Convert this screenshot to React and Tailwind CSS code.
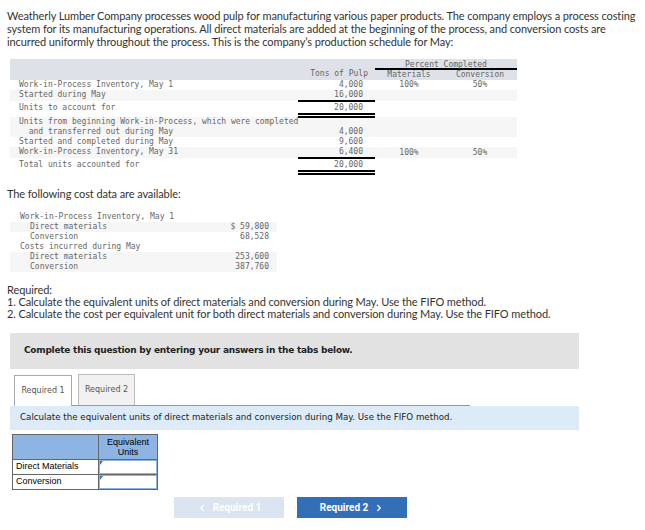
import { ChevronLeft, ChevronRight } from 'lucide-react';

const mono = { fontFamily: '"DejaVu Sans Mono", "Liberation Mono", monospace' };

const schedule = [
  { label: 'Work-in-Process Inventory, May 1', tons: '4,000', mat: '100%', conv: '50%', stripe: false },
  { label: 'Started during May', tons: '16,000', stripe: true, line: 'single' },
  { label: 'Units to account for', tons: '20,000', stripe: false, line: 'double', gap: true },
  { label: 'Units from beginning Work-in-Process, which were completed', label2: '  and transferred out during May', tons: '4,000', stripe: true },
  { label: 'Started and completed during May', tons: '9,600', stripe: false },
  { label: 'Work-in-Process Inventory, May 31', tons: '6,400', mat: '100%', conv: '50%', stripe: true, line: 'single' },
  { label: 'Total units accounted for', tons: '20,000', stripe: false, line: 'double', gap: true },
];

const costs = [
  { label: 'Work-in-Process Inventory, May 1', indent: false },
  { label: 'Direct materials', value: '$ 59,800', indent: true, stripe: true },
  { label: 'Conversion', value: '68,528', indent: true },
  { label: 'Costs incurred during May', indent: false },
  { label: 'Direct materials', value: '253,600', indent: true, stripe: true },
  { label: 'Conversion', value: '387,760', indent: true, stripe: true },
];

function ScheduleRow({ row }) {
  return (
    <div className={`flex ${row.stripe ? 'bg-[#f6f6f6]' : ''} ${row.gap ? 'py-[2px]' : ''}`}>
      <div className="w-[288px] pl-[9px] whitespace-pre">
        <div>{row.label}</div>
        {row.label2 && <div>{row.label2}</div>}
      </div>
      <div className="w-[77px] flex flex-col justify-end">
        <div className="text-right pr-[12px]">{row.tons}</div>
        {row.line === 'single' && <div className="h-[2px] bg-black -mb-[1px]" />}
        {row.line === 'double' && <div className="h-[5px] border-y-2 border-black -mb-[3px]" />}
      </div>
      <div className="w-[68px] flex items-end justify-center">{row.mat}</div>
      <div className="w-[74px] flex items-end justify-center">{row.conv}</div>
    </div>
  );
}

export default function App() {
  return (
    <div className="w-[645px] h-[530px] bg-white text-[#333] relative overflow-hidden" style={{ fontFamily: 'Lato, "Open Sans", sans-serif' }}>
      <p className="pl-[7px] pr-[6px] pt-[9px] text-[11px] leading-[13px] tracking-[-0.1px]">
        Weatherly Lumber Company processes wood pulp for manufacturing various paper products. The company employs a process costing system for its manufacturing operations. All direct materials are added at the beginning of the process, and conversion costs are incurred uniformly throughout the process. This is the company’s production schedule for May:
      </p>

      <div className="ml-[10px] mt-[11px] w-[507px] text-[8px] leading-[10px] text-[#666]" style={mono}>
        <div className="flex h-[21px] bg-[#dee1e7]">
          <div className="w-[288px]" />
          <div className="w-[77px] flex items-end justify-end pr-[7px] pb-[1px]">Tons of Pulp</div>
          <div className="w-[142px] flex flex-col">
            <div className="text-center pt-[1px] border-b-2 border-black h-[11px] leading-[9px]">Percent Completed</div>
            <div className="flex flex-1 items-end pb-[1px]">
              <div className="w-[68px] text-center">Materials</div>
              <div className="w-[74px] text-center">Conversion</div>
            </div>
          </div>
        </div>
        {schedule.map((row, i) => (
          <ScheduleRow key={i} row={row} />
        ))}
      </div>

      <p className="pl-[7px] mt-[13px] text-[11px] leading-[13px] tracking-[-0.1px]">The following cost data are available:</p>

      <div className="ml-[10px] mt-[12px] w-[267px] text-[8px] leading-[10px] text-[#666]" style={mono}>
        {costs.map((c, i) => (
          <div key={i} className={`flex ${c.stripe ? 'bg-[#f6f6f6]' : ''}`}>
            <div className={`flex-1 ${c.indent ? 'pl-[20px]' : 'pl-[10px]'}`}>{c.label}</div>
            <div className="w-[80px] text-right pr-[8px] whitespace-pre">{c.value}</div>
          </div>
        ))}
      </div>

      <div className="pl-[7px] mt-[12px] text-[11px] leading-[12px] tracking-[-0.1px]">
        <div>Required:</div>
        <div>1. Calculate the equivalent units of direct materials and conversion during May. Use the FIFO method.</div>
        <div>2. Calculate the cost per equivalent unit for both direct materials and conversion during May. Use the FIFO method.</div>
      </div>

      <div className="mx-[10px] w-[569px] mt-[13px] h-[36px] bg-[#e2e2e2] flex items-center pl-[14px]">
        <span className="text-[9px] tracking-[-0.25px] font-bold text-[#222]" style={{ fontFamily: '"DejaVu Sans", Verdana, sans-serif' }}>
          Complete this question by entering your answers in the tabs below.
        </span>
      </div>

      <div className="ml-[14px] mt-[6px] w-[456px] flex items-end border-b border-[#999] h-[31px]" style={{ fontFamily: '"DejaVu Sans", Verdana, sans-serif' }}>
        <div className="h-[31px] w-[58px] border border-b-0 border-[#aaa] bg-white text-[8px] text-[#555] flex items-center justify-center -mb-[1px] pb-[1px]">Required 1</div>
        <div className="h-[31px] w-[57px] ml-[6px] border border-b-0 border-[#bbb] bg-[#f1f1f1] text-[8px] text-[#555] flex items-center justify-center">Required 2</div>
      </div>

      <div className="mx-[10px] w-[569px] h-[24px] bg-[#dcebf7] flex items-center pl-[10px] text-[8.7px] text-[#222]" style={{ fontFamily: '"DejaVu Sans", Verdana, sans-serif' }}>
        Calculate the equivalent units of direct materials and conversion during May. Use the FIFO method.
      </div>

      <div className="ml-[12px] mt-[4px] w-[146px] border border-[#666] text-[9px] text-black" style={{ fontFamily: '"Liberation Sans", Arial, sans-serif' }}>
        <div className="flex h-[24px] bg-[#8db4e2]">
          <div className="w-[86px] border-r border-[#666]" />
          <div className="flex-1 text-center leading-[10px] pt-[2px]">Equivalent<br />Units</div>
        </div>
        {['Direct Materials', 'Conversion'].map((label) => (
          <div key={label} className="flex h-[15px] border-t border-[#666]">
            <div className="w-[86px] border-r border-[#666] pl-[3px] flex items-center">{label}</div>
            <div className="flex-1 relative border border-[#8db4e2] bg-white">
              <div className="absolute top-0 left-0 w-0 h-0 border-t-[4px] border-t-[#3a72b6] border-r-[3px] border-r-transparent" />
            </div>
          </div>
        ))}
      </div>

      <div className="flex mt-[7px] ml-[174px] gap-[13px]" style={{ fontFamily: 'Roboto, "Liberation Sans", sans-serif' }}>
        <div className="w-[110px] h-[21px] bg-[#dbe5f1] text-white text-[10px] font-bold flex items-center justify-center gap-[6px]">
          <ChevronLeft className="w-[10px] h-[10px]" strokeWidth={3} />
          Required 1
        </div>
        <div className="w-[110px] h-[21px] bg-[#336fb6] text-white text-[10px] font-bold flex items-center justify-center gap-[6px]">
          Required 2
          <ChevronRight className="w-[10px] h-[10px]" strokeWidth={3} />
        </div>
      </div>
    </div>
  );
}
